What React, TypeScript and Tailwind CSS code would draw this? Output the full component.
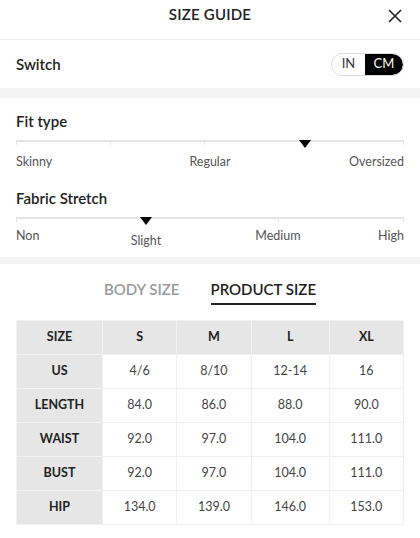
import React from "react";

const rows = [
  ["US", "4/6", "8/10", "12-14", "16"],
  ["LENGTH", "84.0", "86.0", "88.0", "90.0"],
  ["WAIST", "92.0", "97.0", "104.0", "111.0"],
  ["BUST", "92.0", "97.0", "104.0", "111.0"],
  ["HIP", "134.0", "139.0", "146.0", "153.0"],
];

function Track({ cols, arrow }: { cols: string; arrow: string }) {
  return (
    <div className="relative h-[6px]">
      <div className={`grid h-[5px] ${cols}`}>
        <div className="border-t-2 border-l border-[#e4e4e4]" />
        <div className="border-t-2 border-l border-[#e4e4e4]" />
        <div className="border-t-2 border-l border-r border-[#e4e4e4]" />
      </div>
      {/* indicator */}
      <div
        className={`absolute top-0 -translate-x-1/2 w-0 h-0 border-l-[6px] border-r-[6px] border-t-[8px] border-l-transparent border-r-transparent border-t-black ${arrow}`}
      />
    </div>
  );
}

export default function App() {
  return (
    <div
      className="w-[420px] h-[538px] bg-white text-[#222] overflow-hidden"
      style={{ fontFamily: "Lato, 'Noto Sans', sans-serif" }}
    >
      {/* header */}
      <div className="relative h-10 flex items-center justify-center border-b border-[#eeeeee]">
        <span className="text-[15px] font-semibold tracking-[0.2px] -mt-[11px]">SIZE GUIDE</span>
        <svg className="absolute right-[18px] top-[9px]" width="14" height="14" viewBox="0 0 14 14">
          <path d="M1 1 L13 13 M13 1 L1 13" stroke="#222" strokeWidth="1.6" />
        </svg>
      </div>

      {/* switch */}
      <div className="h-12 flex items-center justify-between px-4">
        <span className="text-[15px] font-semibold">Switch</span>
        <div className="flex h-[23px] rounded-full border border-[#d8d8d8] overflow-hidden text-[13px]">
          <div className="w-[33px] flex items-center justify-center bg-white text-[#333]">IN</div>
          <div className="w-[38px] flex items-center justify-center bg-black text-white rounded-r-full">CM</div>
        </div>
      </div>
      <div className="h-[10px] bg-[#f4f4f4]" />

      {/* fit sliders */}
      <div className="px-4 pt-[13px] pb-[7px]">
        <div className="text-[15px] font-semibold leading-5">Fit type</div>
        <div className="mt-[9px]">
          <Track cols="grid-cols-[94px_94px_1fr]" arrow="left-[74.5%]" />
        </div>
        <div className="grid grid-cols-3 text-[12.5px] text-[#555] leading-4 mt-[8px]">
          <span>Skinny</span>
          <span className="text-center">Regular</span>
          <span className="text-right">Oversized</span>
        </div>

        <div className="text-[15px] font-semibold leading-5 mt-[18px]">Fabric Stretch</div>
        <div className="mt-[9px]">
          <Track cols="grid-cols-[131px_131px_1fr]" arrow="left-[33.5%]" />
        </div>
        <div className="grid grid-cols-[1fr_1fr_1fr] text-[12.5px] text-[#555] leading-4 mt-[5px] relative h-[22px]">
          <span>Non</span>
          <span />
          <span className="text-right">High</span>
          <span className="absolute left-[33.5%] -translate-x-1/2 top-[5px]">Slight</span>
          <span className="absolute left-[67.5%] -translate-x-1/2 top-0">Medium</span>
        </div>
      </div>
      <div className="h-[7px] bg-[#f4f4f4]" />

      {/* tabs */}
      <div className="flex justify-center gap-[31px] pt-[14px] text-[15px] font-semibold">
        <div className="text-[#9a9a9a] pb-[3px]">BODY SIZE</div>
        <div className="text-[#222] pb-[2px] border-b-2 border-[#222]">PRODUCT SIZE</div>
      </div>

      {/* table */}
      <div className="px-4 mt-[15px]">
        <table className="w-full border-collapse text-[12.5px] text-center">
          <thead>
            <tr className="h-[34px] bg-[#e6e6e6] font-bold">
              <th className="w-[86px] border border-[#f2f2f2] font-bold">SIZE</th>
              <th className="border border-[#f2f2f2] font-bold">S</th>
              <th className="border border-[#f2f2f2] font-bold">M</th>
              <th className="border border-[#f2f2f2] font-bold">L</th>
              <th className="border border-[#f2f2f2] font-bold">XL</th>
            </tr>
          </thead>
          <tbody>
            {rows.map((r) => (
              <tr key={r[0]} className="h-[34px]">
                <td className="bg-[#e6e6e6] font-bold border border-[#f2f2f2]">{r[0]}</td>
                {r.slice(1).map((v, i) => (
                  <td key={i} className="border border-[#efefef] text-[#444]">
                    {v}
                  </td>
                ))}
              </tr>
            ))}
          </tbody>
        </table>
      </div>
    </div>
  );
}
